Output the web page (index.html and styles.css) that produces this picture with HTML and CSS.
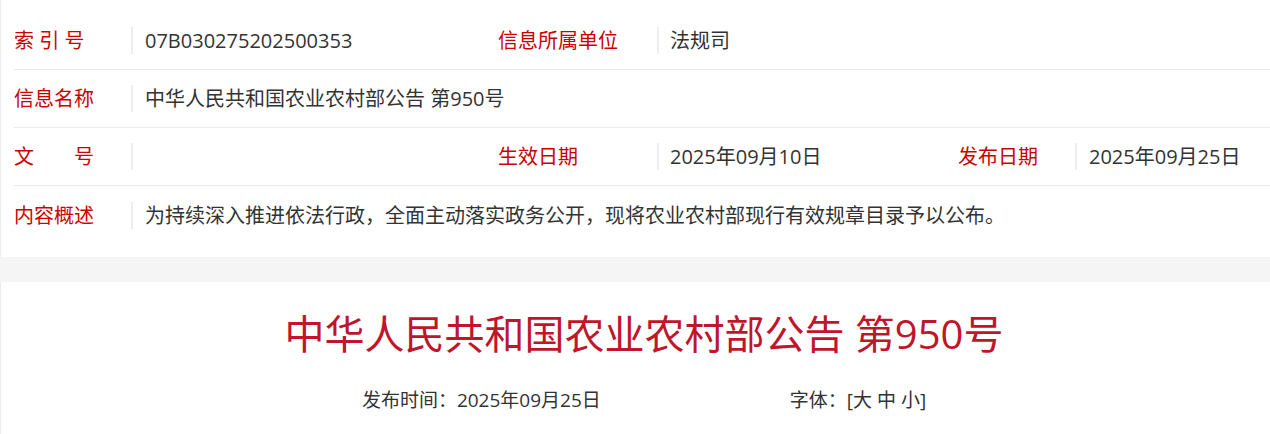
FILE: index.html
```html
<!DOCTYPE html>
<html lang="zh-CN">
<head>
<meta charset="utf-8">
<title>中华人民共和国农业农村部公告 第950号</title>
<link rel="stylesheet" href="styles.css">
</head>
<body>
<div class="page">
  <section class="info">
    <div class="row">
      <div class="lbl w1">索 引 号</div>
      <div class="val v1">07B030275202500353</div>
      <div class="lbl w2">信息所属单位</div>
      <div class="val v2">法规司</div>
    </div>
    <div class="row">
      <div class="lbl w1">信息名称</div>
      <div class="val grow">中华人民共和国农业农村部公告 第950号</div>
    </div>
    <div class="row">
      <div class="lbl w1">文　　号</div>
      <div class="val v1"></div>
      <div class="lbl w2">生效日期</div>
      <div class="val v2">2025年09月10日</div>
      <div class="lbl w1">发布日期</div>
      <div class="val grow">2025年09月25日</div>
    </div>
    <div class="row last">
      <div class="lbl w1">内容概述</div>
      <div class="val grow">为持续深入推进依法行政，全面主动落实政务公开，现将农业农村部现行有效规章目录予以公布。</div>
    </div>
  </section>
  <div class="band"></div>
  <section class="article">
    <h1 class="title">中华人民共和国农业农村部公告 第950号</h1>
    <div class="meta">
      <span>发布时间：2025年09月25日</span>
      <span>字体：[大 中 小]</span>
    </div>
  </section>
</div>
</body>
</html>
```

FILE: styles.css
```css
html, body {
  margin: 0;
  padding: 0;
  background: #fff;
}
body {
  font-family: "Open Sans", "Noto Sans CJK SC", sans-serif;
  color: #333;
}
.page {
  width: 1270px;
  overflow: hidden;
}
.info {
  border-left: 1px solid #ececec;
  padding: 12px 0 13px 13px;
  background: #fff;
}
.row {
  display: flex;
  align-items: center;
  height: 57px;
  border-bottom: 1px solid #ebebeb;
  font-size: 20px;
}
.row.last {
  border-bottom: none;
  height: 58px;
}
.lbl {
  color: #cc0000;
  flex: none;
  line-height: 27px;
  white-space: pre;
}
.w1 { width: 117px; }
.w2 { width: 159px; }
.val {
  flex: none;
  height: 27px;
  line-height: 27px;
  border-left: 2px solid #eeeeee;
  padding-left: 12px;
  box-sizing: border-box;
  white-space: nowrap;
  color: #333;
}
.v1 { width: 367px; }
.v2 { width: 301px; padding-left: 11px; }
.grow { flex: 1; }
.band {
  height: 25px;
  background: #f5f5f5;
}
.article {
  border-left: 1px solid #ececec;
  padding: 22px 0 20px 17px;
  text-align: center;
}
.title {
  margin: 0;
  font-size: 40px;
  line-height: 60px;
  font-weight: normal;
  color: #c0152b;
}
.meta {
  margin-top: 21px;
  display: flex;
  justify-content: center;
  gap: 189px;
  font-size: 19px;
  line-height: 30px;
  color: #333;
}
```
